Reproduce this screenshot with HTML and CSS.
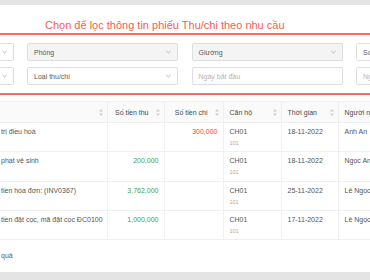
FILE: index.html
```html
<!DOCTYPE html>
<html lang="vi">
<head>
<meta charset="utf-8">
<link rel="stylesheet" href="styles.css">
</head>
<body>
<div class="page">
  <div class="topbar"></div>
  <div class="title">Chọn để lọc thông tin phiếu Thu/chi theo nhu cầu</div>
  <div class="rule"></div>
  <div class="filters">
    <div class="field"><span class="val"></span><svg class="chev" viewBox="0 0 6 4"><polyline points="0.5,0.8 3,3.2 5.5,0.8"/></svg></div>
    <div class="field disabled"><span class="val">Phòng</span><svg class="chev" viewBox="0 0 6 4"><polyline points="0.5,0.8 3,3.2 5.5,0.8"/></svg></div>
    <div class="field disabled"><span class="val">Giường</span><svg class="chev" viewBox="0 0 6 4"><polyline points="0.5,0.8 3,3.2 5.5,0.8"/></svg></div>
    <div class="field"><span class="val">Số phiếu</span><svg class="chev" viewBox="0 0 6 4"><polyline points="0.5,0.8 3,3.2 5.5,0.8"/></svg></div>
    <div class="field"><span class="val"></span><svg class="chev" viewBox="0 0 6 4"><polyline points="0.5,0.8 3,3.2 5.5,0.8"/></svg></div>
    <div class="field"><span class="val">Loại thu/chi</span><svg class="chev" viewBox="0 0 6 4"><polyline points="0.5,0.8 3,3.2 5.5,0.8"/></svg></div>
    <div class="field"><span class="ph">Ngày bắt đầu</span></div>
    <div class="field"><span class="ph">Ngày kết thúc</span></div>
  </div>
  <div class="rule"></div>
  <table class="grid">
    <colgroup>
      <col class="c-desc"><col class="c-in"><col class="c-out"><col class="c-apt"><col class="c-time"><col class="c-person">
    </colgroup>
    <thead>
      <tr>
        <th><div class="hd hd-left"><span></span><svg class="sort" viewBox="0 0 4 7"><polygon points="2,0 4,2.6 0,2.6"/><polygon points="0,4.4 4,4.4 2,7"/></svg></div></th>
        <th><div class="hd hd-right"><span>Số tiền thu</span><svg class="sort" viewBox="0 0 4 7"><polygon points="2,0 4,2.6 0,2.6"/><polygon points="0,4.4 4,4.4 2,7"/></svg></div></th>
        <th><div class="hd hd-right"><span>Số tiền chi</span><svg class="sort" viewBox="0 0 4 7"><polygon points="2,0 4,2.6 0,2.6"/><polygon points="0,4.4 4,4.4 2,7"/></svg></div></th>
        <th><div class="hd hd-left"><span>Căn hộ</span><svg class="sort" viewBox="0 0 4 7"><polygon points="2,0 4,2.6 0,2.6"/><polygon points="0,4.4 4,4.4 2,7"/></svg></div></th>
        <th><div class="hd hd-left"><span>Thời gian</span><svg class="sort" viewBox="0 0 4 7"><polygon points="2,0 4,2.6 0,2.6"/><polygon points="0,4.4 4,4.4 2,7"/></svg></div></th>
        <th><div class="hd hd-left"><span>Người nhận</span></div></th>
      </tr>
    </thead>
    <tbody>
      <tr>
        <td class="desc">trị điều hoà</td>
        <td class="num"></td>
        <td class="num out">300,000</td>
        <td>CH01<div class="sub">101</div></td>
        <td>18-11-2022</td>
        <td>Anh An</td>
      </tr>
      <tr>
        <td class="desc">phạt vệ sinh</td>
        <td class="num in">200,000</td>
        <td class="num"></td>
        <td>CH01<div class="sub">101</div></td>
        <td>18-11-2022</td>
        <td>Ngọc Anh</td>
      </tr>
      <tr>
        <td class="desc">tiền hóa đơn: (INV0367)</td>
        <td class="num in">3,762,000</td>
        <td class="num"></td>
        <td>CH01<div class="sub">101</div></td>
        <td>25-11-2022</td>
        <td>Lê Ngọc Anh</td>
      </tr>
      <tr>
        <td class="desc">tiền đặt cọc, mã đặt cọc ĐC0100</td>
        <td class="num in">1,000,000</td>
        <td class="num"></td>
        <td>CH01<div class="sub">101</div></td>
        <td>17-11-2022</td>
        <td>Lê Ngọc Anh</td>
      </tr>
    </tbody>
  </table>
  <div class="summary">quả</div>
  <div class="footer"></div>
</div>
</body>
</html>
```

FILE: styles.css
```css
html, body {
  margin: 0;
  padding: 0;
  background: #ffffff;
  overflow: hidden;
}
body {
  font-family: "Liberation Sans", Arial, sans-serif;
}
.page {
  width: 370px;
  height: 280px;
  overflow: hidden;
  display: flex;
  flex-direction: column;
}
.topbar {
  flex: none;
  height: 5px;
  background: #e4e4e4;
}
.title {
  flex: none;
  padding: 14px 0 1px 45px;
  font-size: 11px;
  line-height: 13px;
  color: #f2604f;
  white-space: nowrap;
}
.rule {
  flex: none;
  height: 2px;
  background: #f36e5b;
}
.filters {
  flex: none;
  display: grid;
  grid-template-columns: repeat(4, 151px);
  column-gap: 13.5px;
  row-gap: 6px;
  margin-left: -137.5px;
  padding: 8px 0;
}
.field {
  height: 18px;
  box-sizing: border-box;
  border: 1px solid #dedede;
  border-radius: 2px;
  background: #ffffff;
  display: flex;
  align-items: center;
  padding: 0 6px;
  font-size: 7px;
  color: #5a5a5a;
  white-space: nowrap;
  overflow: hidden;
}
.field.disabled {
  background: #f4f4f4;
}
.ph {
  color: #b4b4b4;
}
.chev {
  margin-left: auto;
  width: 5px;
  height: 4px;
  flex: none;
  fill: none;
  stroke: #9a9a9a;
  stroke-width: 0.9;
}
.grid {
  flex: none;
  margin-top: 6px;
  width: 400px;
  table-layout: fixed;
  border-collapse: collapse;
  font-size: 7px;
  color: #555555;
}
.c-desc { width: 107px; }
.c-in { width: 57px; }
.c-out { width: 59px; }
.c-apt { width: 58px; }
.c-time { width: 57px; }
.c-person { width: 62px; }
.grid th {
  height: 20px;
  padding: 0;
  background: #fafafa;
  border-top: 1px solid #f0f0f0;
  border-bottom: 1px solid #efefef;
  border-right: 1px solid #efefef;
  font-weight: normal;
  color: #4a4a4a;
  text-align: left;
  white-space: nowrap;
}
.hd {
  display: flex;
  align-items: center;
  height: 19px;
  padding: 0 4px 0 6px;
}
.hd-left {
  justify-content: space-between;
}
.hd-right {
  justify-content: flex-end;
  gap: 7px;
}
.sort {
  width: 4px;
  height: 7px;
  flex: none;
  fill: #cfcfcf;
}
.grid td {
  height: 29.3px;
  box-sizing: border-box;
  padding: 4px 6px 0;
  vertical-align: top;
  line-height: 10px;
  border-bottom: 1px solid #f0f0f0;
  border-right: 1px solid #f0f0f0;
  white-space: nowrap;
  overflow: hidden;
}
.grid td.desc {
  padding-left: 1px;
}
.grid td.num {
  text-align: right;
  padding-right: 5px;
}
.in {
  color: #46a052;
}
.out {
  color: #f04a40;
}
.sub {
  font-size: 5.5px;
  line-height: 12px;
  color: #ababab;
}
.summary {
  flex: none;
  margin-top: 11px;
  padding-left: 1px;
  font-size: 7px;
  line-height: 10px;
  color: #5a5a5a;
}
.footer {
  flex: none;
  margin-top: auto;
  height: 8px;
  background: #e4e4e4;
}
```
